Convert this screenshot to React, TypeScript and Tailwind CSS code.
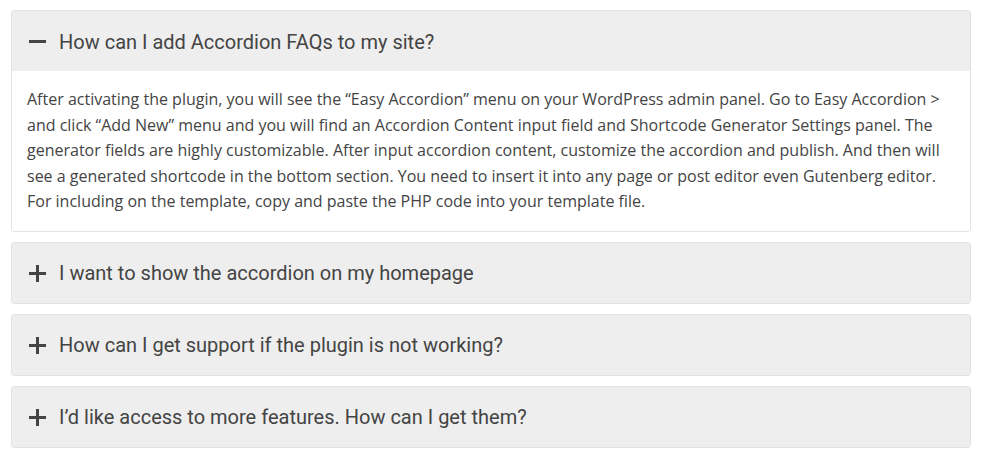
import { useState } from 'react';

const faqs = [
  {
    q: 'How can I add Accordion FAQs to my site?',
    a: 'After activating the plugin, you will see the “Easy Accordion” menu on your WordPress admin panel. Go to Easy Accordion > and click “Add New” menu and you will find an Accordion Content input field and Shortcode Generator Settings panel. The generator fields are highly customizable. After input accordion content, customize the accordion and publish. And then will see a generated shortcode in the bottom section. You need to insert it into any page or post editor even Gutenberg editor. For including on the template, copy and paste the PHP code into your template file.',
  },
  { q: 'I want to show the accordion on my homepage', a: '' },
  { q: 'How can I get support if the plugin is not working?', a: '' },
  { q: 'I’d like access to more features. How can I get them?', a: '' },
];

function Icon({ open }: { open: boolean }) {
  return (
    <svg width="17" height="17" viewBox="0 0 17 17" className="shrink-0">
      <rect x="0" y="7" width="17" height="3" fill="#444" />
      {!open && <rect x="7" y="0" width="3" height="17" fill="#444" />}
    </svg>
  );
}

export default function App() {
  const [open, setOpen] = useState(0);

  return (
    <div className="min-h-screen bg-white px-[11px] pt-[10px] flex flex-col gap-[10px]">
      {faqs.map((f, i) => (
        <div key={i} className="border border-[#e2e2e2] rounded-[3px] overflow-hidden">
          <button
            onClick={() => setOpen(open === i ? -1 : i)}
            className="w-full h-[60px] bg-[#eeeeee] flex items-center gap-[13px] pl-[17px] pt-[1px] text-left"
          >
            <Icon open={open === i} />
            <span className="text-[20px] text-[#444] font-['Roboto',sans-serif]">{f.q}</span>
          </button>
          {open === i && (
            <div className="bg-white px-[15px] py-[16px] text-[16px] leading-[1.6] text-[#444] font-['Open_Sans',sans-serif]">
              {f.a}
            </div>
          )}
        </div>
      ))}
    </div>
  );
}
